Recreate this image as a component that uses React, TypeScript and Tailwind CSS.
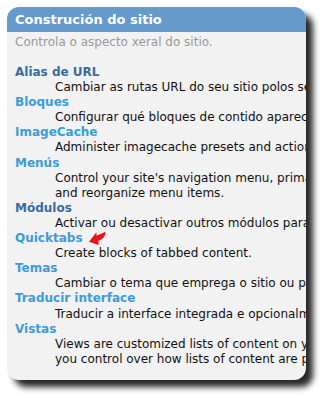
import React from 'react';

type Item = { title: string; visited?: boolean; lines: string[]; arrow?: boolean };

const items: Item[] = [
  { title: 'Alias de URL', visited: true, lines: ['Cambiar as rutas URL do seu sitio polos seus propios alias.'] },
  { title: 'Bloques', lines: ['Configurar qué bloques de contido aparecen nas barras laterais.'] },
  { title: 'ImageCache', lines: ['Administer imagecache presets and actions.'] },
  {
    title: 'Menús',
    lines: ["Control your site's navigation menu, primary links and secondary links, as well as", 'and reorganize menu items.'],
  },
  { title: 'Módulos', visited: true, lines: ['Activar ou desactivar outros módulos para o seu sitio.'] },
  { title: 'Quicktabs', arrow: true, lines: ['Create blocks of tabbed content.'] },
  { title: 'Temas', lines: ['Cambiar o tema que emprega o sitio ou permitir aos usuarios escoller.'] },
  { title: 'Traducir interface', lines: ['Traducir a interface integrada e opcionalmente outros textos.'] },
  {
    title: 'Vistas',
    lines: ['Views are customized lists of content on your system; they are highly configurable and give', 'you control over how lists of content are presented.'],
  },
];

const Arrow = () => (
  <svg width="17" height="15" viewBox="0 0 16 14" className="ml-[6px] mt-[-3px]">
    <path d="M0 11 L7 2 L7 5 C10 4 13 3 15.5 1.5 C15.5 6 12.5 9 9 10 L9 14 Z" fill="#e8141b" />
  </svg>
);

export default function App() {
  return (
    <div className="w-[329px] h-[400px] bg-white pt-[7px] pl-[7px]" style={{ fontFamily: '"DejaVu Sans", Verdana, sans-serif' }}>
      <div className="w-[299px] h-[373px] rounded-[12px] overflow-hidden bg-[#f2f2f2] shadow-[7px_7px_6px_rgba(0,0,0,0.85)]">
        <div className="h-[25px] bg-[#6699cc] pl-[8px] flex items-center">
          <h2 className="text-[13px] font-bold text-white leading-[15px]">Construción do sitio</h2>
        </div>
        <p className="pl-[8px] pt-[3px] text-[12px] leading-[15px] text-[#999999] whitespace-nowrap">Controla o aspecto xeral do sitio.</p>
        <dl className="mt-[15px] pl-[8px] text-[12px] leading-[15.1px]">
          {items.map((item) => (
            <div key={item.title}>
              <dt className="flex items-center whitespace-nowrap">
                <span className={item.visited ? 'font-bold text-[#3a6aa0]' : 'font-bold text-[#3b9dd6]'}>{item.title}</span>
                {item.arrow && <Arrow />}
              </dt>
              {item.lines.map((line) => (
                <dd key={line} className="pl-[40px] text-[#111111] whitespace-nowrap">
                  {line}
                </dd>
              ))}
            </div>
          ))}
        </dl>
      </div>
    </div>
  );
}
